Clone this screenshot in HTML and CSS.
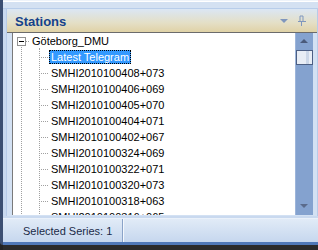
FILE: index.html
```html
<!DOCTYPE html>
<html>
<head>
<meta charset="utf-8">
<link rel="stylesheet" href="styles.css">
</head>
<body>
<div class="window">
  <div class="edge"></div>
  <div class="main">
    <div class="topstrip"></div>
    <div class="panel">
      <div class="header">
        <span class="title">Stations</span>
        <div class="tools">
          <svg class="tool" width="10" height="8" viewBox="0 0 10 8"><path d="M1 2h8L5 6z" fill="#7f96bd"/></svg>
          <svg class="tool" width="10" height="11" viewBox="0 0 10 11"><path d="M3 1v5M6 1v5M3 1h3M1 6.5h8M4.5 7v4" stroke="#7f96bd" stroke-width="1" fill="none"/></svg>
        </div>
      </div>
      <div class="body">
        <div class="tree">
          <div class="row root">
            <span class="g g-root"><span class="box"></span></span>
            <span class="label">Göteborg_DMU</span>
          </div>
          <div class="row"><span class="g g-v"></span><span class="g g-t"></span><span class="label sel">Latest Telegram</span></div>
          <div class="row"><span class="g g-v"></span><span class="g g-t"></span><span class="label">SMHI2010100408+073</span></div>
          <div class="row"><span class="g g-v"></span><span class="g g-t"></span><span class="label">SMHI2010100406+069</span></div>
          <div class="row"><span class="g g-v"></span><span class="g g-t"></span><span class="label">SMHI2010100405+070</span></div>
          <div class="row"><span class="g g-v"></span><span class="g g-t"></span><span class="label">SMHI2010100404+071</span></div>
          <div class="row"><span class="g g-v"></span><span class="g g-t"></span><span class="label">SMHI2010100402+067</span></div>
          <div class="row"><span class="g g-v"></span><span class="g g-t"></span><span class="label">SMHI2010100324+069</span></div>
          <div class="row"><span class="g g-v"></span><span class="g g-t"></span><span class="label">SMHI2010100322+071</span></div>
          <div class="row"><span class="g g-v"></span><span class="g g-t"></span><span class="label">SMHI2010100320+073</span></div>
          <div class="row"><span class="g g-v"></span><span class="g g-t"></span><span class="label">SMHI2010100318+063</span></div>
          <div class="row"><span class="g g-v"></span><span class="g g-t"></span><span class="label">SMHI2010100316+065</span></div>
        </div>
        <div class="scrollbar">
          <div class="arrow up"></div>
          <div class="thumb"></div>
          <div class="track"></div>
          <div class="arrow down"></div>
        </div>
      </div>
    </div>
    <div class="status">
      <div class="cell">Selected Series: 1</div>
      <div class="rest"></div>
    </div>
    <div class="bottomline"></div>
    <div class="shadow"></div>
  </div>
</div>
</body>
</html>
```
FILE: styles.css
```css
html, body {
  margin: 0;
  padding: 0;
  width: 318px;
  height: 250px;
  overflow: hidden;
  background: #222;
}
.window {
  display: flex;
  width: 318px;
  height: 250px;
}
.edge {
  width: 3px;
  height: 245px;
  background: #3c4f72;
  border-bottom-left-radius: 3px;
}
.main {
  flex: 1;
  display: flex;
  flex-direction: column;
  background: #c9d9ef;
}
.topstrip {
  flex: none;
  height: 9px;
  background: linear-gradient(#eef3fa 0 1px, #ffffff 1px 2px, #d4e1f2 2px);
  border-bottom: 1px solid #b8cdea;
  box-sizing: border-box;
}
.panel {
  flex: none;
  margin-left: 3px;
  display: flex;
  flex-direction: column;
  border-left: 1px solid #b7cbe8;
  border-right: 1px solid #b7cbe8;
  background: #d3e1f3;
  padding: 0 4px 1px 3px;
}
.header {
  margin: 0 -4px 0 -3px;
  padding: 0 10px 0 8px;
  display: flex;
  align-items: center;
  justify-content: space-between;
  background: linear-gradient(#dbe6f4, #e4dfc6 60%, #e0d2a6);
  border-bottom: 1px solid #6b6b6b;
  box-sizing: border-box;
  height: 24px;
}
.title {
  font-family: "Liberation Sans", Arial, sans-serif;
  font-weight: bold;
  font-size: 13px;
  color: #15428b;
  padding-top: 1px;
}
.tools {
  display: flex;
  align-items: center;
  gap: 8px;
}
.body {
  display: flex;
  height: 182px;
  background: #fff;
  border-left: 1px solid #7a7a7a;
  margin-left: 2px;
}
.tree {
  flex: 1;
  overflow: hidden;
  font-family: "Liberation Sans", Arial, sans-serif;
  font-size: 11px;
  color: #000;
}
.row {
  height: 16px;
  display: flex;
  align-items: center;
}
.g {
  width: 18px;
  height: 16px;
  flex: none;
  position: relative;
}
.g-v {
  background: repeating-linear-gradient(to bottom, #a0a0a0 0 1px, transparent 1px 2px) 8px 0 / 1px 100% no-repeat;
}
.g-t {
  background:
    repeating-linear-gradient(to bottom, #a0a0a0 0 1px, transparent 1px 2px) 8px 0 / 1px 100% no-repeat,
    repeating-linear-gradient(to right, #a0a0a0 0 1px, transparent 1px 2px) 8px 8px / 10px 1px no-repeat;
}
.g-root {
  width: 17px;
  background:
    repeating-linear-gradient(to bottom, #a0a0a0 0 1px, transparent 1px 2px) 8px 12px / 1px 4px no-repeat,
    repeating-linear-gradient(to right, #a0a0a0 0 1px, transparent 1px 2px) 13px 8px / 4px 1px no-repeat;
}
.root {
  background:
    repeating-linear-gradient(to bottom, #a0a0a0 0 1px, transparent 1px 2px) 26px 15px / 1px 1px no-repeat;
}
.box {
  position: absolute;
  left: 4px;
  top: 4px;
  width: 9px;
  height: 9px;
  box-sizing: border-box;
  border: 1px solid #919191;
  background: #fff;
}
.box::after {
  content: "";
  position: absolute;
  left: 1px;
  top: 3px;
  width: 5px;
  height: 1px;
  background: #000;
}
.label {
  padding: 0 2px;
  line-height: 14px;
  white-space: nowrap;
}
.sel {
  background: #3399ff;
  color: #fff;
  outline: 1px dotted #000;
  outline-offset: -1px;
}
.scrollbar {
  width: 17px;
  flex: none;
  display: flex;
  flex-direction: column;
  background: #84a2cf;
  border-left: 1px solid #9db5da;
}
.arrow {
  height: 17px;
  position: relative;
}
.arrow::after {
  content: "";
  position: absolute;
  left: 4px;
  border-left: 4px solid transparent;
  border-right: 4px solid transparent;
}
.up::after {
  top: 6px;
  border-bottom: 4px solid #4a5a7a;
}
.down::after {
  top: 6px;
  border-top: 4px solid #5a6b8c;
}
.thumb {
  height: 15px;
  box-sizing: border-box;
  border: 1px solid #4c5f84;
  background: linear-gradient(to right, #e8edf5 0 60%, #ccd7e8 60% 80%, #e8edf5 80%);
}
.track {
  flex: 1;
}
.status {
  flex: none;
  margin-top: 2px;
  height: 24px;
  display: flex;
  background: linear-gradient(#e1ebf7, #c6d7ee);
  border-top: 1px solid #eaf1fa;
  box-sizing: border-box;
  font-family: "Liberation Sans", Arial, sans-serif;
  font-size: 11px;
  color: #1a2a48;
}
.cell {
  width: 120px;
  display: flex;
  align-items: center;
  padding-left: 20px;
  box-sizing: border-box;
  border-right: 1px solid #8aa3c8;
}
.rest {
  flex: 1;
  border-left: 1px solid #f4f8fd;
}
.bottomline {
  flex: none;
  height: 3px;
  background: #4f78b8;
}
.shadow {
  flex: 1;
  background: #2a2a2a;
}
```
